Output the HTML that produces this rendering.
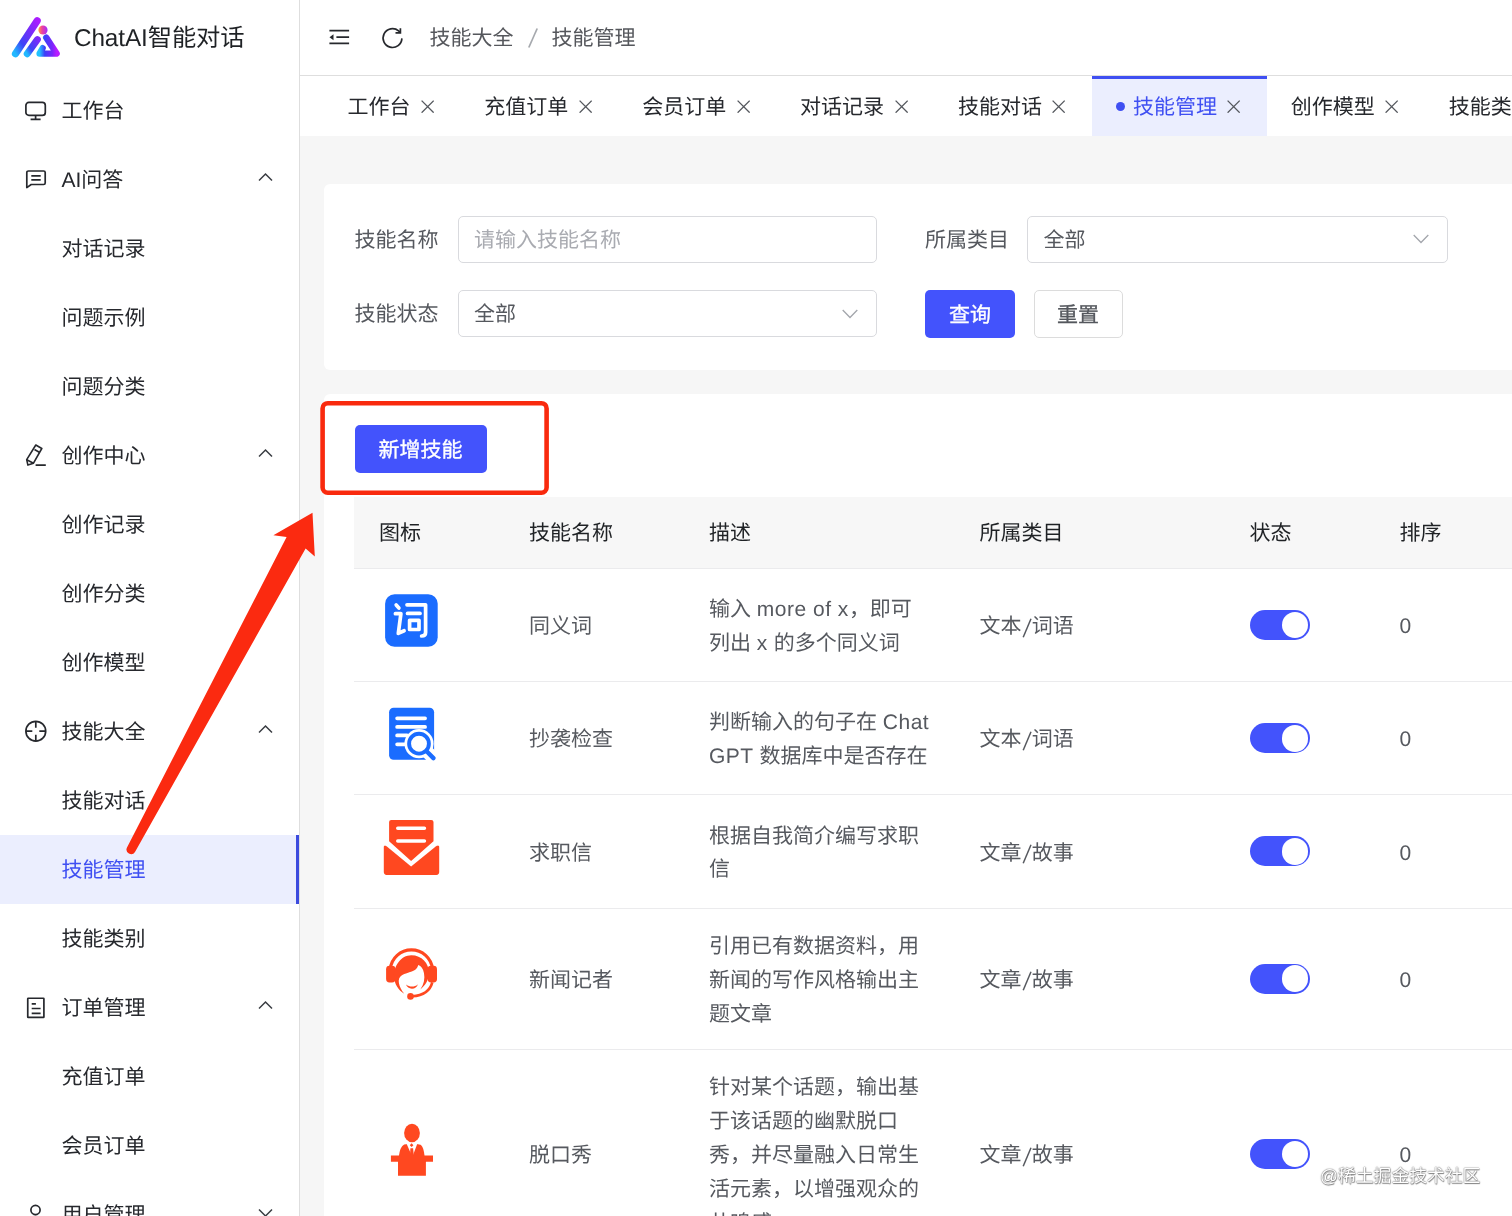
<!DOCTYPE html>
<html lang="zh-CN">
<head>
<meta charset="utf-8">
<title>ChatAI智能对话 - 技能管理</title>
<style>
*{box-sizing:border-box;margin:0;padding:0}
html,body{width:1512px;height:1216px;overflow:hidden;background:#f6f6f6}
body{font-family:"Liberation Sans",sans-serif;font-size:21px;color:#303133;position:relative;-webkit-font-smoothing:antialiased;text-rendering:geometricPrecision}
svg{display:block}
#side,#head,#tabs,#search,#tcard,#tbl,#wm{will-change:transform}
/* ---------- sidebar ---------- */
#side{position:absolute;left:0;top:0;width:300px;height:1216px;background:#fff;border-right:1px solid #dedede;overflow:hidden}
#logo{position:absolute;left:0;top:0;width:299px;height:75px}
#logo svg{position:absolute;left:10px;top:14px}
#logo .t{position:absolute;left:74px;top:0;height:75px;line-height:78px;font-size:24.300px;color:#1f2225;white-space:nowrap;letter-spacing:-.1px}
#menu{position:absolute;left:0;top:75.5px;width:299px}
.mi{position:relative;height:69px;line-height:71px;padding-left:61.400px;color:#26282d;white-space:nowrap}
.mi .ic{position:absolute;left:24px;top:23px;width:23px;height:23px}
.mi .ch{position:absolute;left:258px;top:25.5px;width:15px;height:15px}
.mi.on{background:#ebeefe;color:#3f4ff2}
.mi.on:after{content:"";position:absolute;right:0;top:0;width:3px;height:100%;background:#3b4ade}
/* ---------- header ---------- */
#head{position:absolute;left:300px;top:0;width:1212px;height:76px;background:#fff;border-bottom:1px solid #dedede}
#head .fold{position:absolute;left:29px;top:29.300px}
#head .ref{position:absolute;left:80.500px;top:25.700px}
#bc{position:absolute;left:129.5px;top:0;height:75px;line-height:77px;color:#55575c;white-space:nowrap}
#bc svg{display:inline-block;vertical-align:-3px;margin:0 14px 0 14px}
/* ---------- tabs ---------- */
#tabs{position:absolute;left:300px;top:76px;width:1212px;height:60px;background:#fff;overflow:hidden;white-space:nowrap;padding-left:24px;display:flex}
.tb{position:relative;height:60px;line-height:60px;padding:3px 0 0 23.400px;color:#26282d;flex:none;display:flex;align-items:center}
.tb .x{margin-left:10.500px;margin-right:26.700px;width:13.300px;height:13.300px;position:relative;top:-1px}
.tb.on{background:#ebeefe;color:#3f4ff2;border-top:3px solid #3f4ff2;padding-top:0}
.tb.on .dot{width:9px;height:9px;border-radius:50%;background:#3f4ff2;margin-right:8.200px;position:relative;top:-1px}
/* ---------- cards ---------- */
#search{position:absolute;left:324px;top:184px;width:1300px;height:186px;background:#fff;border-radius:6px}
.lb{position:absolute;height:47px;line-height:49px;color:#55585e;white-space:nowrap}
.fd{position:absolute;height:47px;line-height:47px;border:1px solid #d9dade;border-radius:5px;background:#fff;padding-left:15.5px;color:#55585e;white-space:nowrap}
.fd.ph{color:#a9abb1}
.fd svg{position:absolute;right:18px;top:17.5px}
.btn{position:absolute;height:48px;line-height:51px;-webkit-text-stroke:.35px currentColor;border-radius:5px;text-align:center;white-space:nowrap}
.btn.p{background:#4353fc;color:#fff}
.btn.d{background:#fff;border:1px solid #dcdcdc;color:#55585e;line-height:49px}
#tcard{position:absolute;left:324px;top:394px;width:1300px;height:900px;background:#fff;border-radius:6px 6px 0 0}
/* ---------- table ---------- */
#tbl{position:absolute;left:354px;top:496px;width:1300px;padding:.5px 0 0 0}
.tr{position:relative;display:flex;border-bottom:1px solid #ebebed;align-items:center}
.tr.h{height:72.5px;background:#f7f7f7;color:#1f2225}
.td{flex:none;padding:21.35px 24.5px 17.35px;line-height:33.9px;color:#56595f}
.tr.h .td{color:#1f2225;padding-top:4px;padding-bottom:0}
.td.c1,.td.c5{padding-top:19.35px;padding-bottom:19.35px}
.td.c1{width:150.5px;padding-left:25px}.c2{width:180px}.c3{width:270.5px}.c4{width:270px}.c5{width:150px}.c6{width:300px}
.icb{width:65px;height:65px;margin-bottom:8.5px}
.sw{width:60.5px;height:30px;border-radius:15px;background:#4353fc;position:relative}
.sw:after{content:"";position:absolute;right:1.7px;top:1.7px;width:26.6px;height:26.6px;border-radius:50%;background:#fff}
.en{letter-spacing:.500px}
.sl{display:inline-block;vertical-align:-4.500px}
/* ---------- annotations ---------- */
#redbox{position:absolute;left:320.5px;top:400.5px;width:228.5px;height:94.5px;border:4px solid #f92a10;border-radius:9px}
#arrow{position:absolute;left:0;top:0;pointer-events:none}
#wm{position:absolute;left:1320px;top:1163px;font-size:17.8px;line-height:26px;color:#fff;white-space:nowrap;text-shadow:0 0 1.5px #777,0 0 1px #6a6a6a,.5px .5px 1px #888;letter-spacing:0}
</style>
</head>
<body>
<div id="side">
<div id="logo"><svg width="54" height="48" viewBox="0 0 54 48">
<defs>
<linearGradient id="lg1" x1="0" y1="1" x2="1" y2="0"><stop offset="0" stop-color="#22b8ff"/><stop offset=".3" stop-color="#3b45f7"/><stop offset=".7" stop-color="#7a2bfa"/><stop offset="1" stop-color="#a91cff"/></linearGradient>
<linearGradient id="lg2" x1="0" y1="1" x2="1" y2="0"><stop offset="0" stop-color="#22b8ff"/><stop offset=".35" stop-color="#3b45f7"/><stop offset="1" stop-color="#7a2bfa"/></linearGradient>
<linearGradient id="lg3" x1="0" y1="0" x2="1" y2="0"><stop offset="0" stop-color="#22c2ff"/><stop offset=".3" stop-color="#3b3ff7"/><stop offset=".75" stop-color="#7a26fb"/><stop offset="1" stop-color="#b81cff"/></linearGradient>
<linearGradient id="lg4" x1="0" y1="0" x2="1" y2="0"><stop offset="0" stop-color="#ffa13c"/><stop offset=".4" stop-color="#f0409c"/><stop offset="1" stop-color="#a02cff"/></linearGradient>
</defs>
<path d="M5.5 39.8 L27.2 6.8" stroke="url(#lg1)" stroke-width="7.2" stroke-linecap="round" fill="none"/>
<path d="M17.2 39.8 L27.4 25.6" stroke="url(#lg2)" stroke-width="6.9" stroke-linecap="round" fill="none"/>
<path d="M36.2 23.6 L46.6 39.6 L29.6 39.6 L32.6 34.2" stroke="url(#lg3)" stroke-width="6.4" stroke-linecap="round" stroke-linejoin="round" fill="none"/>
<circle cx="33" cy="16" r="4.6" fill="url(#lg4)"/>
</svg><div class="t">ChatAI智能对话</div></div>
<div id="menu">
<div class="mi"><svg class="ic" viewBox="0 0 23 23"><g fill="none" stroke="#26282d" stroke-width="1.7"><rect x="1.9" y="3.4" width="19.4" height="13" rx="3"/><path d="M11.6 16.4v4M6.6 20.4h10"/></g></svg>工作台</div>
<div class="mi"><svg class="ic" viewBox="0 0 23 23"><g fill="none" stroke="#26282d" stroke-width="1.7" stroke-linejoin="round"><path d="M2.8 19.6V4.6a1.6 1.6 0 0 1 1.6-1.6h15.2a1.6 1.6 0 0 1 1.6 1.6v10.3a1.6 1.6 0 0 1-1.6 1.6H7.2z"/><path d="M7.3 7.8h9.4M7.3 11.9h9.4"/></g></svg>AI问答<svg class="ch" viewBox="0 0 15 15" width="15" height="15"><path d="M1 10.5 L7.5 4 L14 10.5" fill="none" stroke="#3a3d42" stroke-width="1.5"/></svg></div>
<div class="mi">对话记录</div>
<div class="mi">问题示例</div>
<div class="mi">问题分类</div>
<div class="mi"><svg class="ic" viewBox="0 0 23 23"><g fill="none" stroke="#26282d" stroke-width="1.600" stroke-linejoin="round"><path d="M11.800 1L17.800 4.500L9.500 19.200L3.900 21.100L2.700 15.700z"/><path d="M2.700 15.700L9.500 19.200M10.500 5.500L15.700 8.500M11.600 21.100H21.800"/></g></svg>创作中心<svg class="ch" viewBox="0 0 15 15" width="15" height="15"><path d="M1 10.5 L7.5 4 L14 10.5" fill="none" stroke="#3a3d42" stroke-width="1.5"/></svg></div>
<div class="mi">创作记录</div>
<div class="mi">创作分类</div>
<div class="mi">创作模型</div>
<div class="mi"><svg class="ic" viewBox="0 0 23 23"><g fill="none" stroke="#26282d" stroke-width="1.7"><circle cx="11.800" cy="11.200" r="9.900"/><path d="M11.800 1.300v6.400M11.800 14.700v6.400M1.900 11.200h6.400M15.300 11.200h6.400"/></g></svg>技能大全<svg class="ch" viewBox="0 0 15 15" width="15" height="15"><path d="M1 10.5 L7.5 4 L14 10.5" fill="none" stroke="#3a3d42" stroke-width="1.5"/></svg></div>
<div class="mi">技能对话</div>
<div class="mi on">技能管理</div>
<div class="mi">技能类别</div>
<div class="mi"><svg class="ic" viewBox="0 0 23 23"><g fill="none" stroke="#26282d" stroke-width="1.7"><rect x="3.750" y="2.250" width="16.150" height="19.150" rx="0.500"/><path d="M7.700 7.800h4.200M7.700 12.500h8.900M7.700 17.300h8.900"/></g></svg>订单管理<svg class="ch" viewBox="0 0 15 15" width="15" height="15"><path d="M1 10.5 L7.5 4 L14 10.5" fill="none" stroke="#3a3d42" stroke-width="1.5"/></svg></div>
<div class="mi">充值订单</div>
<div class="mi">会员订单</div>
<div class="mi"><svg class="ic" viewBox="0 0 23 23"><g fill="none" stroke="#26282d" stroke-width="1.7"><circle cx="11.5" cy="7" r="4.6"/><path d="M2.5 22.5c0-6 4-9 9-9s9 3 9 9"/></g></svg>用户管理<svg class="ch" viewBox="0 0 15 15" width="15" height="15"><path d="M1 4.5 L7.5 11 L14 4.5" fill="none" stroke="#3a3d42" stroke-width="1.5"/></svg></div>
</div>
</div>
<div id="head">
<svg class="fold" width="22" height="16" viewBox="0 0 22 16"><g fill="none" stroke="#26282d" stroke-width="1.7"><path d="M0.4 1.700h19.700M7.400 8.200h12.700M0.400 14.400h19.700"/></g><path d="M0.500 8.200l4-3v6z" fill="#26282d"/></svg>
<svg class="ref" width="24" height="24" viewBox="0 0 24 24"><g fill="none" stroke="#26282d" stroke-width="1.700"><path d="M20.900 12.400a9.400 9.400 0 1 1-3.300-7.500l1.500 1.400"/><path d="M19.400 2.200v4.700h-4.900"/></g></svg>
<div id="bc">技能大全<svg width="10" height="20" viewBox="0 0 10 20"><path d="M0.800 19.500L9.200 0.500" stroke="#a6a9ae" stroke-width="1.700" fill="none"/></svg>技能管理</div>
</div>
<div id="tabs">
<div class="tb">工作台<svg class="x" viewBox="0 0 13 13"><path d="M0.6 0.6l11.8 11.8M12.4 0.6L0.6 12.4" stroke="#55585e" stroke-width="1.3" fill="none"/></svg></div>
<div class="tb">充值订单<svg class="x" viewBox="0 0 13 13"><path d="M0.6 0.6l11.8 11.8M12.4 0.6L0.6 12.4" stroke="#55585e" stroke-width="1.3" fill="none"/></svg></div>
<div class="tb">会员订单<svg class="x" viewBox="0 0 13 13"><path d="M0.6 0.6l11.8 11.8M12.4 0.6L0.6 12.4" stroke="#55585e" stroke-width="1.3" fill="none"/></svg></div>
<div class="tb">对话记录<svg class="x" viewBox="0 0 13 13"><path d="M0.6 0.6l11.8 11.8M12.4 0.6L0.6 12.4" stroke="#55585e" stroke-width="1.3" fill="none"/></svg></div>
<div class="tb">技能对话<svg class="x" viewBox="0 0 13 13"><path d="M0.6 0.6l11.8 11.8M12.4 0.6L0.6 12.4" stroke="#55585e" stroke-width="1.3" fill="none"/></svg></div>
<div class="tb on"><span class="dot"></span>技能管理<svg class="x" viewBox="0 0 13 13"><path d="M0.6 0.6l11.8 11.8M12.4 0.6L0.6 12.4" stroke="#55585e" stroke-width="1.3" fill="none"/></svg></div>
<div class="tb">创作模型<svg class="x" viewBox="0 0 13 13"><path d="M0.6 0.6l11.8 11.8M12.4 0.6L0.6 12.4" stroke="#55585e" stroke-width="1.3" fill="none"/></svg></div>
<div class="tb">技能类别<svg class="x" viewBox="0 0 13 13"><path d="M0.6 0.6l11.8 11.8M12.4 0.6L0.6 12.4" stroke="#55585e" stroke-width="1.3" fill="none"/></svg></div>
</div>
<div id="search">
<div class="lb" style="left:30.400px;top:31.5px">技能名称</div>
<div class="fd ph" style="left:133.5px;top:31.5px;width:419px">请输入技能名称</div>
<div class="lb" style="left:601px;top:31.5px">所属类目</div>
<div class="fd" style="left:703px;top:31.5px;width:420.5px">全部<svg width="16" height="10" viewBox="0 0 16 10"><path d="M0.7 1l7.3 7.5L15.3 1" fill="none" stroke="#a3a6ac" stroke-width="1.3"/></svg></div>
<div class="lb" style="left:30.400px;top:106px">技能状态</div>
<div class="fd" style="left:133.5px;top:106px;width:419px">全部<svg width="16" height="10" viewBox="0 0 16 10"><path d="M0.7 1l7.3 7.5L15.3 1" fill="none" stroke="#a3a6ac" stroke-width="1.3"/></svg></div>
<div class="btn p" style="left:601px;top:106px;width:90px">查询</div>
<div class="btn d" style="left:709.5px;top:106px;width:89px">重置</div>
</div>
<div id="tcard"><div class="btn p" style="left:30.5px;top:30.5px;width:132px">新增技能</div></div>
<div id="tbl">
<div class="tr h"><div class="td c1">图标</div><div class="td c2">技能名称</div><div class="td c3">描述</div><div class="td c4">所属类目</div><div class="td c5">状态</div><div class="td c6">排序</div></div>
<div class="tr"><div class="td c1"><svg class="icb" viewBox="0 0 65 65"><rect x="6.1" y="6.3" width="52.6" height="52.4" rx="9.5" fill="#1a6cff"/>
<g fill="none" stroke="#fff" stroke-width="3.7" stroke-linecap="round" stroke-linejoin="round">
<path d="M17.2 17l2.7 3"/><path d="M16.4 25.7h5.5L19.3 45.4l5.8-2.7"/>
<path d="M28 16.8h18.6v27.6q0 3.6-4 3.6"/><path d="M28.6 25.4h12.4"/><rect x="30.6" y="32.3" width="9.4" height="9.2"/></g></svg></div><div class="td c2">同义词</div><div class="td c3">输入 <span class="en">more of x</span>，即可<br>列出 <span class="en">x</span> 的多个同义词</div><div class="td c4">文本<svg class="sl" width="10.300" height="20" viewBox="0 0 10.300 20"><path d="M1.200 19.300L9 .700" stroke="#56595f" stroke-width="1.500" fill="none"/></svg>词语</div><div class="td c5"><div class="sw"></div></div><div class="td c6">0</div></div>
<div class="tr"><div class="td c1"><svg class="icb" viewBox="0 0 65 65"><rect x="10.1" y="5.8" width="45" height="52" rx="4.5" fill="#1a6cff"/>
<g fill="none" stroke="#fff" stroke-width="3.7" stroke-linecap="round"><path d="M18.1 16.3h28M18.1 24.9h28M18.1 33.4h10M18.1 42.3h8"/></g>
<circle cx="40" cy="41.7" r="14.6" fill="#fff"/><path d="M48 49.7l9 9" stroke="#fff" stroke-width="13" stroke-linecap="round"/>
<circle cx="40" cy="41.7" r="9.9" fill="#fff" stroke="#1a6cff" stroke-width="3.9"/><path d="M47.6 49.3l6.8 6.8" stroke="#1a6cff" stroke-width="4.4" stroke-linecap="round"/></svg></div><div class="td c2">抄袭检查</div><div class="td c3">判断输入的句子在 <span class="en">Chat</span><br><span class="en">GPT</span> 数据库中是否存在</div><div class="td c4">文本<svg class="sl" width="10.300" height="20" viewBox="0 0 10.300 20"><path d="M1.200 19.300L9 .700" stroke="#56595f" stroke-width="1.500" fill="none"/></svg>词语</div><div class="td c5"><div class="sw"></div></div><div class="td c6">0</div></div>
<div class="tr"><div class="td c1"><svg class="icb" viewBox="0 0 65 65"><g transform="translate(0,.5)"><rect x="4.800" y="26" width="55.400" height="33.400" rx="2.800" fill="#ff4820"/>
<path d="M0 0h65v24.300L32.100 51.100 0 24.500z" fill="#fff"/><path d="M0 0h7.600v30.800q-1.700-1.600-2.800 0.200H0zM65 0h-7.600v30.800q1.700-1.600 2.800 0.200H65z" fill="#fff"/>
<path d="M10.100 6.600a2.200 2.200 0 0 1 2.200-2.200h40a2.200 2.200 0 0 1 2.200 2.200V25.800L32.100 45.500 10.100 25.800z" fill="#ff4820"/>
<path d="M18.800 12.700h26.600M18.800 25.500h26.600" stroke="#fff" stroke-width="3.600" stroke-linecap="round"/></g></svg></div><div class="td c2">求职信</div><div class="td c3">根据自我简介编写求职信</div><div class="td c4">文章<svg class="sl" width="10.300" height="20" viewBox="0 0 10.300 20"><path d="M1.200 19.300L9 .700" stroke="#56595f" stroke-width="1.500" fill="none"/></svg>故事</div><div class="td c5"><div class="sw"></div></div><div class="td c6">0</div></div>
<div class="tr"><div class="td c1"><svg class="icb" viewBox="0 0 65 65"><g fill="#ff4820">
<path d="M11.3 27a21.2 21.2 0 0 1 42.2 0" fill="none" stroke="#ff4820" stroke-width="3.2"/>
<rect x="7.1" y="23.8" width="9.4" height="16.6" rx="3.4"/><rect x="48.6" y="23.8" width="9.4" height="16.6" rx="3.4"/>
<path d="M32.3 13.2c10.5 0 17.6 8 17.6 17.6 0 7-3.4 12.600-8.600 16.700 3.700-5.400 4.700-10.900 3.700-16.300-.9-4.600-2.900-7.400-5.700-8.200-1.600 7.200-10.300 6.600-16.400 10.300-2.700 1.600-3.600 4.600-3 7.800.7 3.600 2.300 6.800 5.300 10.700-5.500-3.600-10.200-9.500-10.200-18.300 0-9.300 6.800-20.300 17.300-20.300z"/>
<path d="M27 42.600c2 1.400 3.800 2 6 2 2.300 0 4-.6 5.900-2.400-1 2.800-3 4.500-6 4.500-2.800 0-4.900-1.500-5.900-4.100z"/>
<circle cx="31.500" cy="54.400" r="3.300"/></g>
<path d="M53.300 40.300c-2.200 8.400-9 13.100-20 14" fill="none" stroke="#ff4820" stroke-width="2.600"/></svg></div><div class="td c2">新闻记者</div><div class="td c3">引用已有数据资料，用新闻的写作风格输出主题文章</div><div class="td c4">文章<svg class="sl" width="10.300" height="20" viewBox="0 0 10.300 20"><path d="M1.200 19.300L9 .700" stroke="#56595f" stroke-width="1.500" fill="none"/></svg>故事</div><div class="td c5"><div class="sw"></div></div><div class="td c6">0</div></div>
<div class="tr"><div class="td c1"><svg class="icb" viewBox="0 0 65 65"><g transform="translate(0,.6)">
<ellipse cx="33" cy="15.400" rx="7.900" ry="9.200" fill="#ff4820"/>
<path d="M19.900 39C20.500 32 22.500 28.500 25.200 26.900L28.800 26.300L37.600 26.300L41.500 27.200C44 29 45 33 45.600 39z" fill="#ff4820"/>
<path d="M27.500 26L38.400 26L33.300 39.500z" fill="#fff"/>
<path d="M32.600 25.700l1.800 1.900-1.800 1.900-1.800-1.900zM31.400 30.600h2.700l.8 8.400h-4z" fill="#ff4820"/>
<path d="M11.900 37.800h42.100v6.300h-7.100v14.100h-27.900v-14.100h-7.100z" fill="#ff4820"/></g></svg></div><div class="td c2">脱口秀</div><div class="td c3">针对某个话题，输出基于该话题的幽默脱口秀，并尽量融入日常生活元素，以增强观众的共鸣感。</div><div class="td c4">文章<svg class="sl" width="10.300" height="20" viewBox="0 0 10.300 20"><path d="M1.200 19.300L9 .700" stroke="#56595f" stroke-width="1.500" fill="none"/></svg>故事</div><div class="td c5"><div class="sw"></div></div><div class="td c6">0</div></div>
</div>
<svg id="arrow" width="1512" height="1216" viewBox="0 0 1512 1216"><rect x="322.600" y="403.200" width="224" height="89.500" rx="5.200" fill="none" stroke="#f92a0e" stroke-width="4.600"/><path d="M312.500 512.800L273.400 535.200L286.600 537L127 847.500a4.600 4.600 0 0 0 8 4.500L305.600 548.500L314.800 556.500z" fill="#fb2a10"/></svg>
<div id="wm">@稀土掘金技术社区</div>
</body>
</html>
